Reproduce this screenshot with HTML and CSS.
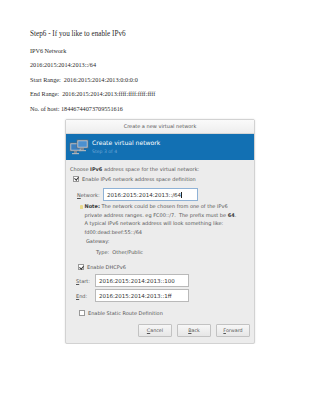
FILE: index.html
```html
<!DOCTYPE html>
<html lang="en">
<head>
  <meta charset="UTF-8" />
  <meta name="viewport" content="width=device-width, initial-scale=1.0" />
  <title>Step6 - IPv6</title>
  <link rel="stylesheet" href="styles.css">
</head>
<body>

  <!-- page text -->
  <div class="doc">
    <p class="heading">Step6 - If you like to enable IPv6</p>
    <p class="line">IPV6 Network</p>
    <p class="line">2016:2015:2014:2013::/64</p>
    <p class="line">Start Range:&nbsp; 2016:2015:2014:2013:0:0:0:0</p>
    <p class="line">End Range:&nbsp; 2016:2015:2014:2013:ffff:ffff:ffff:ffff</p>
    <p class="line">No. of host: 18446744073709551616</p>
  </div>

  <!-- screenshot of the wizard -->
  <div class="dialog">
    <div class="titlebar">Create a new virtual network</div>

    <div class="banner">
      <svg class="banner-icon" width="20" height="16" viewBox="0 0 20 16">
        <rect x="1" y="4" width="11" height="8" fill="#c9d3dc" stroke="#5b6b7a" stroke-width="0.8"/>
        <rect x="2.2" y="5.2" width="8.6" height="5.6" fill="#3a7fc0"/>
        <rect x="5" y="12" width="3" height="2" fill="#7d8994"/>
        <rect x="3" y="14" width="7" height="1.2" fill="#aab4bd"/>
        <rect x="8" y="1" width="11" height="8" fill="#c9d3dc" stroke="#5b6b7a" stroke-width="0.8"/>
        <rect x="9.2" y="2.2" width="8.6" height="5.6" fill="#4a90d0"/>
        <rect x="12" y="9" width="3" height="2" fill="#7d8994"/>
        <rect x="10" y="11" width="7" height="1.2" fill="#aab4bd"/>
      </svg>
      <div>
        <div class="banner-title">Create virtual network</div>
        <div class="banner-step">Step 3 of 4</div>
      </div>
    </div>

    <div class="body">
      <div class="row">Choose <b>IPv6</b> address space for the virtual network:</div>

      <div class="row check-row indent1">
        <span class="check on"></span>
        <span>Enable IPv6 network address space definition</span>
      </div>

      <div class="field network-field">
        <span class="label network-label"><u>N</u>etwork:</span>
        <span class="input network-input">2016:2015:2014:2013::/64<span class="caret"></span></span>
      </div>

      <div class="note">
        <span class="bulb"></span>
        <div>
          <b>Note:</b> The network could be chosen from one of the IPv6<br>
          private address ranges. eg FC00::/7.&nbsp; The prefix must be <b>64</b>.<br>
          A typical IPv6 network address will look something like:<br>
          fd00:dead:beef:55::/64
        </div>
      </div>

      <div class="row gateway">Gateway:</div>
      <div class="row type">Type:&nbsp; Other/Public</div>

      <div class="row check-row dhcp">
        <span class="check on"></span>
        <span>Enable DHCPv6</span>
      </div>

      <div class="field range-field first">
        <span class="label range-label"><u>S</u>tart:</span>
        <span class="input range-input">2016:2015:2014:2013::100</span>
      </div>
      <div class="field range-field">
        <span class="label range-label"><u>E</u>nd:</span>
        <span class="input range-input">2016:2015:2014:2013::1ff</span>
      </div>

      <div class="row check-row static">
        <span class="check"></span>
        <span>Enable Static Route Definition</span>
      </div>

      <div class="buttons">
        <button><u>C</u>ancel</button>
        <button><u>B</u>ack</button>
        <button><u>F</u>orward</button>
      </div>
    </div>
  </div>

</body>
</html>
```

FILE: styles.css
```css
body {
  margin: 0;
  background: #fff;
  color: #2a2a2a;
}
.doc {
  padding: 28px 0 0 30px;
  font-family: 'Liberation Serif', serif;
  font-variant-ligatures: none;
}
.doc p {
  margin: 0;
  white-space: nowrap;
}
.heading {
  font-size: 7.2px;
  line-height: 12px;
}
.line {
  font-size: 6.2px;
  line-height: 9px;
  margin-top: 5.5px !important;
}
.dialog {
  margin: 6.5px 0 0 65px;
  width: 188px;
  border: 1px solid #d2d2d2;
  border-radius: 2px;
  background: #ececec;
  font-family: 'DejaVu Sans', sans-serif;
  color: #555;
  box-shadow: 0 0 2px rgba(0, 0, 0, 0.12);
}
.titlebar {
  height: 13px;
  line-height: 13px;
  text-align: center;
  font-size: 5px;
  color: #555;
  background: linear-gradient(#fafafa, #eeeeee);
  border-bottom: 1px solid #d6d6d6;
}
.banner {
  height: 26px;
  background: #1270b3;
  display: flex;
  align-items: center;
  padding-left: 3px;
  gap: 3px;
}
.banner-icon {
  display: block;
}
.banner-title {
  color: #fff;
  font-size: 6.1px;
  line-height: 8px;
}
.banner-step {
  color: #6ea6d6;
  font-size: 4.6px;
  line-height: 7px;
  margin-top: 1px;
}
.body {
  padding: 5px 4px 6px 4px;
  font-size: 5px;
}
.row {
  line-height: 8px;
  white-space: nowrap;
}
.row b, .note b {
  color: #3a3a3a;
}
.check-row {
  display: flex;
  align-items: center;
  gap: 3px;
}
.indent1 {
  margin-top: 2px;
  padding-left: 3px;
}
.check {
  width: 4px;
  height: 4px;
  border: 0.6px solid #999;
  background: #fff;
  position: relative;
}
.check.on::after {
  content: "";
  position: absolute;
  left: 0.8px;
  top: -0.6px;
  width: 1.6px;
  height: 3.2px;
  border: solid #333;
  border-width: 0 1px 1px 0;
  transform: rotate(40deg);
}
.field {
  display: flex;
  align-items: center;
}
.network-field {
  margin-top: 5px;
  padding-left: 7px;
}
.label {
  color: #555;
}
.network-label {
  width: 26px;
}
.input {
  border: 0.6px solid #b9b9b9;
  background: #fff;
  color: #333;
  font-size: 5.5px;
  padding-left: 3px;
  box-sizing: border-box;
  white-space: nowrap;
}
.network-input {
  width: 95px;
  border-color: #8fb2d6;
  height: 13px;
  line-height: 13px;
}
.caret {
  display: inline-block;
  width: 0.6px;
  height: 6px;
  background: #222;
  vertical-align: -1px;
}
.note {
  display: flex;
  gap: 2px;
  margin-top: 1px;
  padding-left: 10px;
  line-height: 8.7px;
  white-space: nowrap;
}
.bulb {
  flex: none;
  width: 2.5px;
  height: 4px;
  margin-top: 2.5px;
  background: #e8d98a;
  border-radius: 1px 1px 0.5px 0.5px;
}
.gateway {
  padding-left: 16px;
  margin-top: 0.5px;
}
.type {
  padding-left: 26px;
  margin-top: 3px;
}
.dhcp {
  margin-top: 7px;
  padding-left: 8px;
}
.range-field {
  margin-top: 2px;
  padding-left: 6px;
}
.range-field.first {
  margin-top: 3px;
}
.range-label {
  width: 19px;
}
.range-input {
  width: 94px;
  height: 13px;
  line-height: 13px;
}
.static {
  margin-top: 7px;
  padding-left: 9px;
}
.buttons {
  display: flex;
  justify-content: flex-end;
  gap: 5px;
  margin-top: 7px;
}
.buttons button {
  width: 34px;
  height: 13px;
  padding: 0;
  font-family: 'DejaVu Sans', sans-serif;
  font-size: 4.8px;
  color: #555;
  background: linear-gradient(#f7f7f7, #e6e6e6);
  border: 0.6px solid #c2c2c2;
  border-radius: 1px;
}
.buttons u, .field u, .row u {
  text-decoration-thickness: 0.4px;
}
```
